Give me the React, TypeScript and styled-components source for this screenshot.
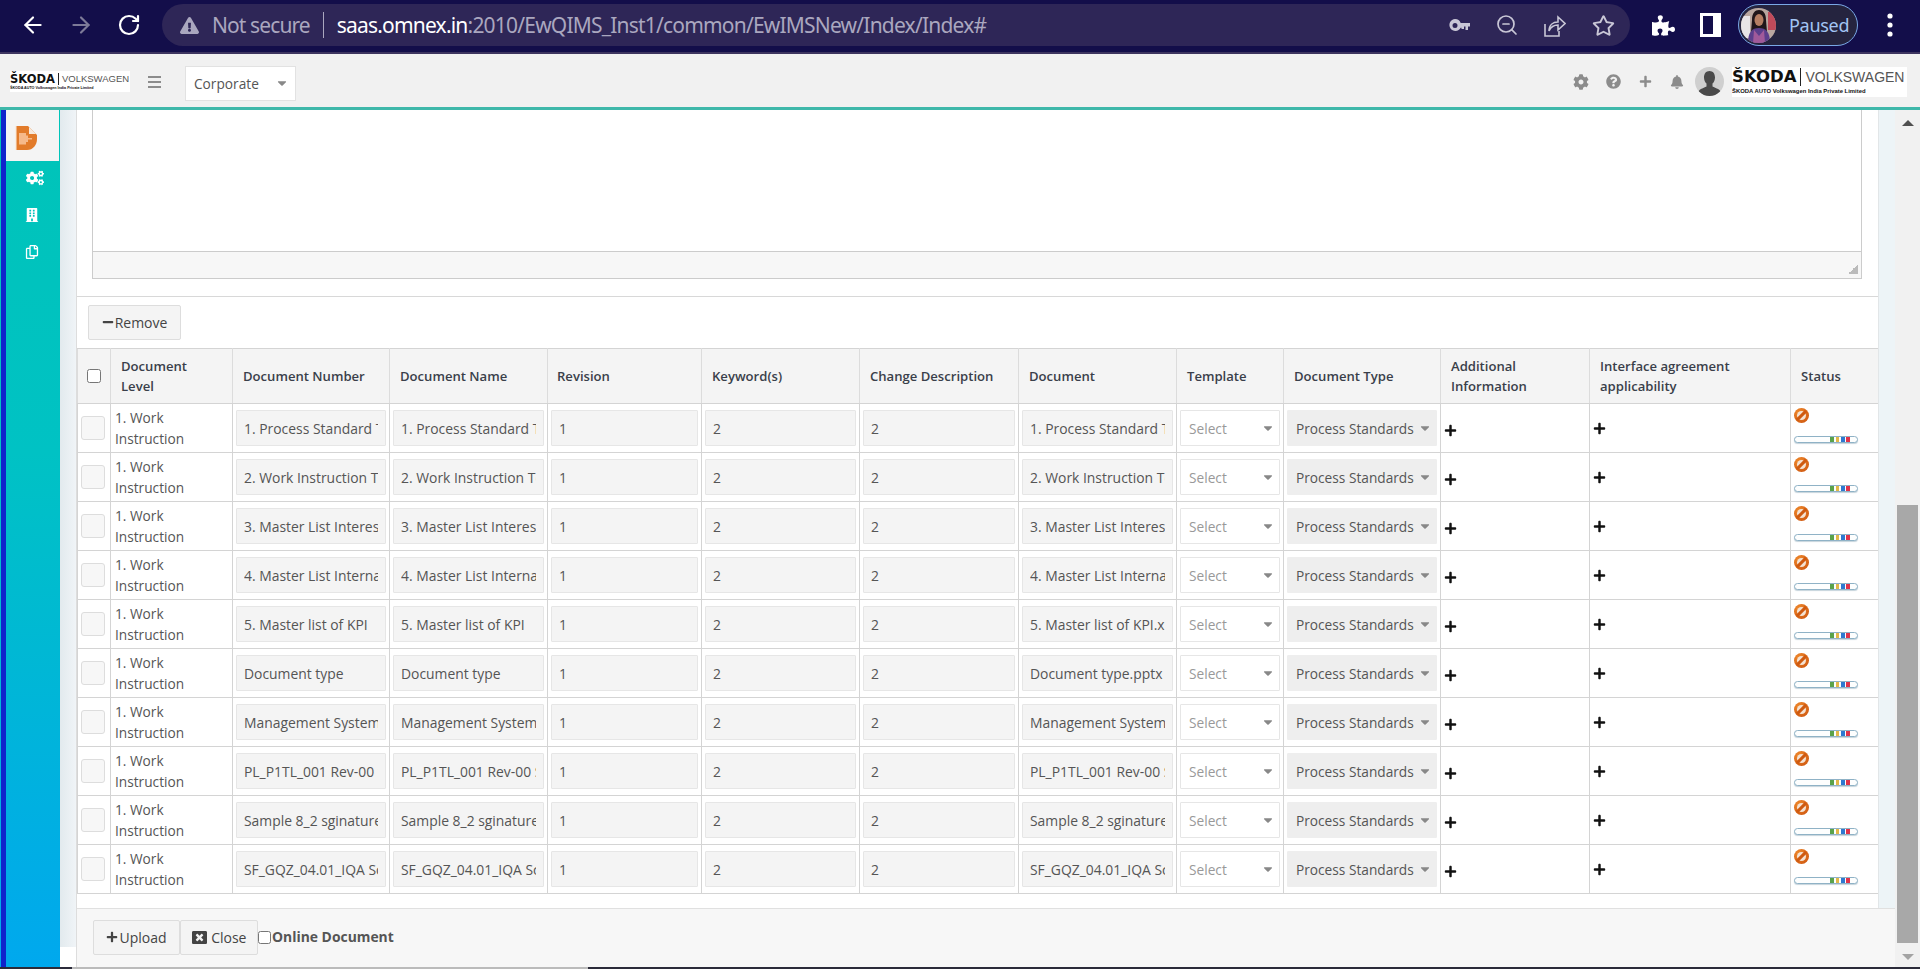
import React from "react";
import styled, {createGlobalStyle} from "styled-components";
import {
  FaBell,
  FaBuilding,
  FaCaretDown,
  FaCog,
  FaCogs,
  FaExclamationTriangle,
  FaMinus,
  FaPlus,
  FaPuzzlePiece,
  FaQuestionCircle,
  FaRegCopy,
  FaRegStar,
  FaWindowClose,
} from "react-icons/fa";
import {ArrowLeft, ArrowRight, RotateCw, ZoomOut} from "lucide-react";

const GlobalStyle = createGlobalStyle`
  html, body {
    margin: 0;
    height: 100%;
    overflow: hidden;
    background: #fff;
  }

  body {
    font-family: "Open Sans", "Noto Sans", sans-serif;
    font-size: 13.7px;
    color: #555;
  }

  * {
    box-sizing: border-box;
  }
`;

const Page = styled.div`
  display: flex;
  flex-direction: column;
  width: 1920px;
  height: 969px;
  overflow: hidden;
`;

/* chrome of the browser */
const BrowserBar = styled.div`
  flex: none;
  display: flex;
  align-items: center;
  height: 54px;
  padding: 0 0 2px 0;
  background: #130e4a;
  border-bottom: 2px solid #3e3560;
  font-family: "Noto Sans", sans-serif;
`;

const NavButton = styled.div<{$dim?: boolean}>`
  flex: none;
  display: flex;
  align-items: center;
  justify-content: center;
  width: 48px;
  color: ${(p) => (p.$dim ? "#7d7a98" : "#fff")};
`;

const NavGroup = styled.div`
  flex: none;
  display: flex;
  padding-left: 9px;
  width: 162px;
`;

const UrlBar = styled.div`
  flex: none;
  display: flex;
  align-items: center;
  width: 1468px;
  height: 42px;
  padding: 0 0 0 18px;
  border-radius: 21px;
  background: #2e2657;
  font-size: 21px;
  color: #aaa7bf;
`;

const NotSecure = styled.span`
  margin-left: 13px;
  padding-right: 13px;
  border-right: 1px solid #aaa7bf;
  line-height: 26px;
  letter-spacing: -0.9px;
`;

const UrlText = styled.span`
  flex: 1;
  margin-left: 13px;
  letter-spacing: -0.8px;
  white-space: nowrap;

  b {
    font-weight: 400;
    color: #fff;
  }
`;

const UrlIcons = styled.div`
  flex: none;
  display: flex;
  align-items: center;
  color: #c9c7d6;
  padding-right: 3px;
`;

const UrlIcon = styled.div`
  display: flex;
  justify-content: center;
  width: 48px;
`;

const ExtIcons = styled.div`
  flex: none;
  display: flex;
  align-items: center;
  padding-left: 10px;
  color: #fff;
`;

const ExtIcon = styled.div`
  display: flex;
  justify-content: center;
  width: 47px;
`;

const ProfilePill = styled.div`
  flex: none;
  display: flex;
  align-items: center;
  gap: 13px;
  width: 120px;
  height: 42px;
  margin-left: 4px;
  padding-left: 2px;
  border: 1.5px solid #7aa8e6;
  border-radius: 21px;
  background: #25243f;
  color: #a3c4f3;
  font-size: 18px;
  letter-spacing: -0.3px;
`;

const Kebab = styled.div`
  flex: 1;
  display: flex;
  justify-content: center;
  padding-left: 2px;
`;

/* application header */
const AppHeader = styled.header`
  flex: none;
  display: flex;
  align-items: center;
  height: 56px;
  padding: 2px 13px 0 10px;
  background: #f1f1f1;
  border-bottom: 3px solid #3fb8aa;
`;

const Logo = styled.div<{$large?: boolean}>`
  flex: none;
  display: flex;
  flex-direction: column;
  justify-content: center;
  width: ${(p) => (p.$large ? 175 : 120)}px;
  height: ${(p) => (p.$large ? 30 : 21)}px;
  background: #fff;
  color: #111;
  overflow: hidden;
`;

const LogoTop = styled.div<{$large?: boolean}>`
  display: flex;
  align-items: center;
  gap: ${(p) => (p.$large ? 4 : 3)}px;
  font-family: "Liberation Sans", sans-serif;
  font-size: ${(p) => (p.$large ? 14 : 9.5)}px;
  line-height: ${(p) => (p.$large ? 18 : 12)}px;
`;

const LogoBrand = styled.span<{$large?: boolean}>`
  font-family: "DejaVu Sans", sans-serif;
  font-weight: 700;
  font-size: ${(p) => (p.$large ? 16.5 : 11.5)}px;
`;

const LogoPartner = styled.span<{$large?: boolean}>`
  padding-left: ${(p) => (p.$large ? 4 : 3)}px;
  border-left: 1px solid #222;
  color: #555;
`;

const LogoSub = styled.div<{$large?: boolean}>`
  font-family: "Liberation Sans", sans-serif;
  font-weight: 700;
  font-size: ${(p) => (p.$large ? 5.9 : 3.7)}px;
  line-height: ${(p) => (p.$large ? 10 : 6)}px;
`;

const MenuToggle = styled.div`
  flex: none;
  display: flex;
  flex-direction: column;
  gap: 3px;
  width: 13px;
  margin-left: 18px;

  span {
    height: 2px;
    background: #8c8c8c;
  }
`;

const CompanySelect = styled.div`
  flex: none;
  display: flex;
  align-items: center;
  justify-content: space-between;
  width: 111px;
  height: 35px;
  margin: 3px 0 0 24px;
  padding: 0 6px 0 8px;
  background: #fff;
  border: 1px solid #e2e2e2;
  color: #555;
`;

const HeaderTools = styled.div`
  flex: 1;
  display: flex;
  align-items: center;
  justify-content: flex-end;
  color: #8c8c8c;
`;

const HeaderTool = styled.div`
  display: flex;
  justify-content: center;
  width: 32px;
`;

const Avatar = styled.div`
  width: 29px;
  height: 29px;
  margin: 0 8px 0 2px;
  border-radius: 50%;
  overflow: hidden;
  background: #cfcfcf;
`;

/* everything below the header */
const Workspace = styled.div`
  flex: 1;
  display: flex;
  min-height: 0;
`;

const Sidebar = styled.nav`
  flex: none;
  display: flex;
  flex-direction: column;
  width: 60px;
  padding-left: 6px;
  background:
    linear-gradient(#1024cc, #1024cc) 1px 0 / 5px 100% no-repeat,
    linear-gradient(#00c4b8, #00c2c4 40%, #00a8ee 100%);
`;

const SideActive = styled.div`
  display: flex;
  align-items: center;
  justify-content: center;
  height: 51px;
  margin-right: 1px;
  padding: 5px 13px 0 0;
  background: #f4f4f4;
`;

const SideItem = styled.div<{$wide?: boolean}>`
  display: flex;
  align-items: center;
  justify-content: center;
  height: 37px;
  padding: ${(p) => (p.$wide ? "0 0 3px 4px" : "0 2px 3px 0")};
  color: #fff;
`;

const Gutter = styled.div`
  flex: none;
  width: 16px;
  background:
    linear-gradient(#fff, #fff) 0 100% / 100% 20px no-repeat,
    linear-gradient(to right, #e2eaee, #f0f4f7);
`;

const ContentColumn = styled.div`
  flex: none;
  display: flex;
  flex-direction: column;
  width: 1819px;
  border-left: 1px solid #ddd;
`;

const UpperRow = styled.div`
  flex: 1;
  display: flex;
  min-height: 0;
`;

const Main = styled.main`
  flex: none;
  display: flex;
  flex-direction: column;
  width: 1801px;
  background: #fff;
`;

const Editor = styled.div`
  flex: none;
  display: flex;
  flex-direction: column;
  height: 169px;
  margin: 0 16px 0 15px;
  border: 1px solid #ccc;
  border-top: 0;
`;

const EditorArea = styled.div`
  flex: 1;
`;

const EditorStatus = styled.div`
  flex: none;
  display: flex;
  align-items: center;
  justify-content: flex-end;
  height: 27px;
  padding-right: 3px;
  background: #f7f7f7;
  border-top: 1px solid #ccc;
`;

const Grip = styled.div`
  width: 10px;
  height: 10px;
  margin-top: 8px;
  background: linear-gradient(135deg, transparent 50%, #bbb 50%);
`;

const RemoveBar = styled.div`
  flex: none;
  height: 52px;
  margin-top: 17px;
  padding: 8px 0 0 11px;
  border-top: 1px solid #d8d8d8;
`;

const ToolButton = styled.button<{$width: number}>`
  display: inline-flex;
  align-items: center;
  justify-content: center;
  gap: 1px;
  width: ${(p) => p.$width}px;
  height: 35px;
  padding: 0 0 1px;
  background: #f4f4f4;
  border: 1px solid #ddd;
  border-radius: 2px;
  color: #444;
  font-family: inherit;
  font-size: 14px;
`;

const Grid = styled.table`
  flex: none;
  table-layout: fixed;
  width: 1801px;
  border-collapse: collapse;

  td {
    padding: 0;
    height: 49px;
    border: 1px solid #d4d4d4;
    vertical-align: middle;
  }
`;

const HeadCell = styled.th<{$pad?: number}>`
  height: 55px;
  padding: 0 4px 0 ${(p) => p.$pad ?? 10}px;
  background: #f4f4f4;
  border: 1px solid #dcdcdc;
  border-top-color: #d4d4d4;
  border-bottom-color: #d4d4d4;
  color: #3a3f4a;
  font-size: 13.1px;
  font-weight: 600;
  line-height: 20px;
  text-align: left;
`;

const HeadCheck = styled.input`
  display: block;
  width: 14px;
  height: 14px;
  margin: 0 0 0 -1px;
`;

const RowCheck = styled.div`
  width: 24px;
  height: 24px;
  margin-left: 3px;
  background: #f7f7f7;
  border: 1px solid #ddd;
  border-radius: 3px;
`;

const LevelText = styled.div`
  padding-left: 4px;
  line-height: 21px;
  color: #555;
`;

const Field = styled.div`
  display: flex;
  align-items: center;
  height: 36px;
  margin: 0 3px;
  padding: 0 7px;
  background: #f4f4f4;
  border: 1px solid #e6e6e6;
  border-radius: 1px;
  color: #555;
  font-size: 13.9px;
`;

const FieldText = styled.span`
  flex: 1;
  display: block;
  white-space: nowrap;
  overflow: hidden;
`;

const Picker = styled.div<{$disabled?: boolean}>`
  display: flex;
  align-items: center;
  justify-content: space-between;
  height: 36px;
  margin: 0 3px;
  padding: 0 4px 0 8px;
  background: ${(p) => (p.$disabled ? "#eee" : "#fff")};
  border: 1px solid ${(p) => (p.$disabled ? "#eee" : "#e6e6e6")};
  border-radius: 1px;
  color: ${(p) => (p.$disabled ? "#555" : "#999")};
  white-space: nowrap;

  svg {
    flex: none;
    color: #888;
  }
`;

const AddCell = styled.div<{$lift?: number}>`
  display: flex;
  padding-left: 3px;
  margin-top: ${(p) => p.$lift ?? 0}px;
  color: #111;
`;

const StatusCell = styled.div`
  display: flex;
  flex-direction: column;
  align-items: flex-start;
  gap: 13px;
  height: 47px;
  padding: 3px 0 0 3px;
`;

const BanIcon = styled.div`
  position: relative;
  width: 15px;
  height: 15px;
  border-radius: 50%;
  background: radial-gradient(circle at 35% 30%, #f08a2c, #c9500c);
  overflow: hidden;

  &::before {
    content: "";
    position: absolute;
    inset: 3px;
    border-radius: 50%;
    background: #f4e2d2;
  }

  &::after {
    content: "";
    position: absolute;
    left: 1px;
    top: 6px;
    width: 13px;
    height: 3px;
    background: #cf5a10;
    transform: rotate(-45deg);
  }
`;

const Progress = styled.div`
  display: flex;
  align-items: center;
  justify-content: flex-end;
  gap: 1.8px;
  width: 64px;
  height: 7px;
  padding-right: 7px;
  background: #fdfefe;
  border: 1px solid #8fb2c6;
  border-radius: 4px;
  box-shadow: 0 1px 1px #c6d4dc;
`;

const Pip = styled.i<{$color: string}>`
  width: 3.6px;
  height: 5px;
  background: ${(p) => p.$color};
`;

const Footer = styled.div`
  flex: none;
  display: flex;
  align-items: flex-start;
  height: 59px;
  padding: 11px 0 0 16px;
  background: #f7f7f7;
  border-top: 1px solid #e0e0e0;
`;

const OnlineCheck = styled.input`
  flex: none;
  width: 13px;
  height: 13px;
  margin: 11px 1px 0 0;
`;

const OnlineLabel = styled.label`
  margin-top: 7px;
  font-size: 13.9px;
  font-weight: 700;
  color: #555;
`;

const SideRail = styled.div`
  flex: none;
  width: 17px;
  background: #edf4f7;
  border-left: 1px solid #e2e6e8;
`;

const Scrollbar = styled.div`
  flex: 1;
  display: flex;
  flex-direction: column;
  align-items: center;
  padding: 10px 0 7px;
  background: #f1f1f1;
`;

const ArrowUp = styled.div`
  width: 0;
  height: 0;
  border-left: 6px solid transparent;
  border-right: 6px solid transparent;
  border-bottom: 6px solid #505050;
`;

const ArrowDown = styled.div`
  width: 0;
  height: 0;
  margin-top: 11px;
  border-left: 6px solid transparent;
  border-right: 6px solid transparent;
  border-top: 6px solid #a3a3a3;
`;

const Thumb = styled.div`
  width: 21px;
  height: 438px;
  margin-top: auto;
  background: #a8a8a8;
`;

const BottomStrip = styled.div`
  flex: none;
  height: 2px;
  background:
    linear-gradient(#bbb, #bbb) 72px 0 / 516px 100% no-repeat,
    #2b2b3a;
`;

const columns = [33, 122, 157, 158, 154, 158, 159, 158, 107, 157, 149, 201, 88];

const documents = [
  {name: "1. Process Standard Template", file: "1. Process Standard Template.docx"},
  {name: "2. Work Instruction Template", file: "2. Work Instruction Template.docx"},
  {name: "3. Master List Interested Parties", file: "3. Master List Interested Parties.xlsx"},
  {name: "4. Master List Internal Documents", file: "4. Master List Internal Documents.xlsx"},
  {name: "5. Master list of KPI", file: "5. Master list of KPI.xlsx"},
  {name: "Document type", file: "Document type.pptx"},
  {name: "Management System Manual", file: "Management System Manual.docx"},
  {name: "PL_P1TL_001 Rev-00 Sample", file: "PL_P1TL_001 Rev-00 Sample.pdf"},
  {name: "Sample 8_2 sginature", file: "Sample 8_2 sginature.pdf"},
  {name: "SF_GQZ_04.01_IQA Schedule", file: "SF_GQZ_04.01_IQA Schedule.xlsx"},
];

const KeyIcon = () => (
  <svg width="21" height="13" viewBox="0 0 21 13" fill="currentColor">
    <path
      fillRule="evenodd"
      d="M6 0a6 6 0 0 1 5.700 4H21v3.500h-2V11h-2.500V7.500H15V10h-2.500V8.800H11.700A6 6 0 1 1 6 0zm0 4a2.500 2.500 0 1 0 0 5 2.500 2.500 0 0 0 0-5z"
    />
  </svg>
);

const ShareIcon = () => (
  <svg width="22" height="24" viewBox="0 0 22 24" fill="none" stroke="currentColor" strokeWidth="1.6">
    <path d="M1 11v12h14v-5" />
    <path d="M5 18c0-6 4-9 9-9V4l7 6.500-7 6.500v-5c-4 0-7 1.500-9 6z" />
  </svg>
);

const SidePanelIcon = () => (
  <svg width="21" height="24" viewBox="0 0 21 24">
    <path fill="#fff" d="M0 0h21v24H0z" />
    <path fill="#130e4a" d="M3 3h10v18H3z" />
  </svg>
);

const KebabIcon = () => (
  <svg width="6" height="24" viewBox="0 0 6 24" fill="#fff">
    <circle cx="3" cy="3" r="2.600" />
    <circle cx="3" cy="12" r="2.600" />
    <circle cx="3" cy="21" r="2.600" />
  </svg>
);

const ProfilePhoto = () => (
  <svg width="35" height="35" viewBox="0 0 35 35" style={{flex: "none"}}>
    <defs>
      <clipPath id="photoClip">
        <circle cx="17.500" cy="17.500" r="17.500" />
      </clipPath>
    </defs>
    <g clipPath="url(#photoClip)">
      <path fill="#b9a7a0" d="M0 0h35v35H0z" />
      <path fill="#e8e4e6" d="M0 8h9v22H0z" />
      <path fill="#c04a5a" d="M27 4h8v18h-8z" />
      <path fill="#20161a" d="M11 12c0-7 3-10 7-10s7 3 7 10l1 12H10z" />
      <ellipse cx="18" cy="12" rx="4.500" ry="6" fill="#b57e63" />
      <path fill="#5b3f8c" d="M7 35c0-11 4-15 11-15s11 4 11 15z" />
      <path fill="#a05a9a" d="M13 22l5 6 5-6 1 13H12z" />
    </g>
  </svg>
);

const UserPhoto = () => (
  <svg width="29" height="29" viewBox="0 0 29 29">
    <path
      fill="#4a4a4a"
      d="M14.500 4c3.500 0 5.500 2.800 5.500 6.500 0 2.500-1 4.800-2.500 6v3c2 1.200 5.500 2 7 3.500 1 1 1.500 3 1.500 6H3c0-3 .5-5 1.500-6 1.500-1.500 5-2.300 7-3.500v-3C10 15.300 9 13 9 10.500 9 6.800 11 4 14.500 4z"
    />
  </svg>
);

const DocumentIcon = () => (
  <svg width="22" height="24" viewBox="0 0 22 24">
    <path fill="#e27b2a" d="M0 0h13l9 9v4c0 6-4 11-10 11H0z" />
    <path fill="#f7e9dc" d="M14 1l7 7h-7z" />
    <path fill="#f8ece0" d="M0 0h1.500v24H0z" />
    <path fill="#f6b98a" d="M4 7h7v2.500h2V12h4v1.500h-4V16h-2v2.500H4z" />
  </svg>
);

const LogoMark = ({large}: {large?: boolean}) => (
  <Logo $large={large}>
    <LogoTop $large={large}>
      <LogoBrand $large={large}>ŠKODA</LogoBrand>
      <LogoPartner $large={large}>VOLKSWAGEN</LogoPartner>
    </LogoTop>
    <LogoSub $large={large}>ŠKODA AUTO Volkswagen India Private Limited</LogoSub>
  </Logo>
);

const StatusBar = () => (
  <Progress>
    <Pip $color="#5aa24a" />
    <Pip $color="#e2b84a" />
    <Pip $color="#2f78d0" />
    <Pip $color="#e0334a" />
  </Progress>
);

const TextField = ({value}: {value: string}) => (
  <Field>
    <FieldText>{value}</FieldText>
  </Field>
);

const App: React.FC = () => (
  <Page>
    <GlobalStyle />
    <BrowserBar>
      <NavGroup>
        <NavButton>
          <ArrowLeft size={26} strokeWidth={2} />
        </NavButton>
        <NavButton $dim>
          <ArrowRight size={26} strokeWidth={2} />
        </NavButton>
        <NavButton>
          <RotateCw size={24} strokeWidth={2.2} />
        </NavButton>
      </NavGroup>
      <UrlBar>
        <FaExclamationTriangle size={19} />
        <NotSecure>Not secure</NotSecure>
        <UrlText>
          <b>saas.omnex.in</b>:2010/EwQIMS_Inst1/common/EwIMSNew/Index/Index#
        </UrlText>
        <UrlIcons>
          <UrlIcon>
            <KeyIcon />
          </UrlIcon>
          <UrlIcon>
            <ZoomOut size={24} strokeWidth={1.7} />
          </UrlIcon>
          <UrlIcon>
            <ShareIcon />
          </UrlIcon>
          <UrlIcon>
            <FaRegStar size={23} />
          </UrlIcon>
        </UrlIcons>
      </UrlBar>
      <ExtIcons>
        <ExtIcon>
          <FaPuzzlePiece size={23} />
        </ExtIcon>
        <ExtIcon>
          <SidePanelIcon />
        </ExtIcon>
      </ExtIcons>
      <ProfilePill>
        <ProfilePhoto />
        Paused
      </ProfilePill>
      <Kebab>
        <KebabIcon />
      </Kebab>
    </BrowserBar>

    <AppHeader>
      <LogoMark />
      <MenuToggle>
        <span />
        <span />
        <span />
      </MenuToggle>
      <CompanySelect>
        Corporate
        <FaCaretDown size={14} color="#888" />
      </CompanySelect>
      <HeaderTools>
        <HeaderTool>
          <FaCog size={16} />
        </HeaderTool>
        <HeaderTool>
          <FaQuestionCircle size={15} />
        </HeaderTool>
        <HeaderTool>
          <FaPlus size={13} />
        </HeaderTool>
        <HeaderTool>
          <FaBell size={14} />
        </HeaderTool>
        <Avatar>
          <UserPhoto />
        </Avatar>
        <LogoMark large />
      </HeaderTools>
    </AppHeader>

    <Workspace>
      <Sidebar>
        <SideActive>
          <DocumentIcon />
        </SideActive>
        <SideItem $wide>
          <FaCogs size={18} />
        </SideItem>
        <SideItem>
          <FaBuilding size={14} />
        </SideItem>
        <SideItem>
          <FaRegCopy size={14} />
        </SideItem>
      </Sidebar>
      <Gutter />
      <ContentColumn>
        <UpperRow>
          <Main>
            <Editor>
              <EditorArea />
              <EditorStatus>
                <Grip />
              </EditorStatus>
            </Editor>
            <RemoveBar>
              <ToolButton $width={93}>
                <FaMinus size={12} />
                Remove
              </ToolButton>
            </RemoveBar>
            <Grid>
              <colgroup>
                {columns.map((w, i) => (
                  <col key={i} style={{width: w}} />
                ))}
              </colgroup>
              <thead>
                <tr>
                  <HeadCell>
                    <HeadCheck type="checkbox" />
                  </HeadCell>
                  <HeadCell>
                    Document
                    <br />
                    Level
                  </HeadCell>
                  <HeadCell>Document Number</HeadCell>
                  <HeadCell>Document Name</HeadCell>
                  <HeadCell $pad={9}>Revision</HeadCell>
                  <HeadCell>Keyword(s)</HeadCell>
                  <HeadCell>Change Description</HeadCell>
                  <HeadCell>Document</HeadCell>
                  <HeadCell>Template</HeadCell>
                  <HeadCell>Document Type</HeadCell>
                  <HeadCell>Additional Information</HeadCell>
                  <HeadCell>Interface agreement applicability</HeadCell>
                  <HeadCell>Status</HeadCell>
                </tr>
              </thead>
              <tbody>
                {documents.map((doc) => (
                  <tr key={doc.name}>
                    <td>
                      <RowCheck />
                    </td>
                    <td>
                      <LevelText>1. Work Instruction</LevelText>
                    </td>
                    <td>
                      <TextField value={doc.name} />
                    </td>
                    <td>
                      <TextField value={doc.name} />
                    </td>
                    <td>
                      <TextField value="1" />
                    </td>
                    <td>
                      <TextField value="2" />
                    </td>
                    <td>
                      <TextField value="2" />
                    </td>
                    <td>
                      <TextField value={doc.file} />
                    </td>
                    <td>
                      <Picker>
                        Select
                        <FaCaretDown size={14} />
                      </Picker>
                    </td>
                    <td>
                      <Picker $disabled>
                        Process Standards
                        <FaCaretDown size={14} />
                      </Picker>
                    </td>
                    <td>
                      <AddCell $lift={5}>
                        <FaPlus size={13} />
                      </AddCell>
                    </td>
                    <td>
                      <AddCell $lift={1}>
                        <FaPlus size={13} />
                      </AddCell>
                    </td>
                    <td>
                      <StatusCell>
                        <BanIcon />
                        <StatusBar />
                      </StatusCell>
                    </td>
                  </tr>
                ))}
              </tbody>
            </Grid>
          </Main>
          <SideRail />
        </UpperRow>
        <Footer>
          <ToolButton $width={87}>
            <FaPlus size={12} />
            Upload
          </ToolButton>
          <ToolButton $width={78}>
            <FaWindowClose size={15} />
            &nbsp;Close
          </ToolButton>
          <OnlineCheck type="checkbox" id="online" />
          <OnlineLabel htmlFor="online">Online Document</OnlineLabel>
        </Footer>
      </ContentColumn>
      <Scrollbar>
        <ArrowUp />
        <Thumb />
        <ArrowDown />
      </Scrollbar>
    </Workspace>
    <BottomStrip />
  </Page>
);

export default App;
